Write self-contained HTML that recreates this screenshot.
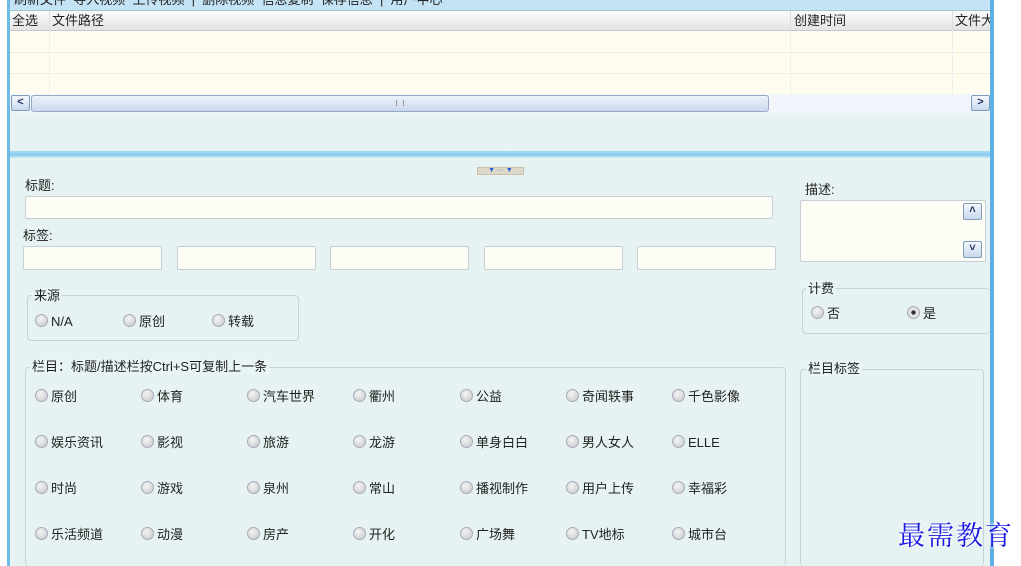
<!DOCTYPE html>
<html><head><meta charset="utf-8"><style>
*{margin:0;padding:0;box-sizing:border-box}
html,body{width:1021px;height:566px;overflow:hidden}
body{background:#fff;position:relative;font-family:"Liberation Sans","Noto Sans CJK SC",sans-serif;font-size:13px;color:#222}
.a{position:absolute}
.t{position:absolute;white-space:nowrap;font-size:13px;color:#222;line-height:15px}
.inp{position:absolute;background:#fefdf5;border:1px solid #c4cfd8;border-radius:2px}
.grp{position:absolute;border:1px solid #c5d2dc;border-radius:4px}
.leg{position:absolute;background:#e8f4f6;padding:0 2px;font-size:13px;line-height:15px;color:#222;white-space:nowrap}
.r{position:absolute;white-space:nowrap;font-size:13px;line-height:15px;color:#222}
.r::before{content:"";display:inline-block;width:11px;height:11px;border-radius:50%;background:radial-gradient(circle at 40% 35%,#f4f4f4,#c4c6c8);border:1px solid #aab;vertical-align:-1px;margin-right:3px}
.sel::before{background:radial-gradient(circle,#333 0 2px,#eee 2.5px,#c8c8c8)}
.btn{position:absolute;width:18px;height:16px;border:1px solid #7f9db9;border-radius:2px;background:linear-gradient(#f4f8fc,#c8d8ee);font-size:11px;line-height:13px;text-align:center;color:#203060;font-weight:bold}
</style></head><body>
<div class="a" style="left:7px;top:0;width:987px;height:566px;background:#e6f3f2;border-left:3px solid #6dbde8;border-right:4px solid #5fb0e2"></div>
<div class="a" style="left:10px;top:0;width:980px;height:11px;background:#c4e3f4;border-bottom:1px solid #9cc"></div>
<div class="t" style="left:14px;top:-8px">刷新文件 &nbsp;导入视频 &nbsp;上传视频 &nbsp;| &nbsp;删除视频 &nbsp;信息复制 &nbsp;保存信息 &nbsp;| &nbsp;用户中心</div>
<div class="a" style="left:10px;top:11px;width:980px;height:20px;background:linear-gradient(#fafafa,#e4e4e4);border-bottom:1px solid #c8c8c8"></div>
<div class="a" style="left:49px;top:11px;width:1px;height:84px;background:#ddd"></div>
<div class="a" style="left:790px;top:11px;width:1px;height:84px;background:#ddd"></div>
<div class="a" style="left:952px;top:11px;width:1px;height:84px;background:#ddd"></div>
<div class="t" style="left:12px;top:13px">全选</div>
<div class="t" style="left:52px;top:13px">文件路径</div>
<div class="t" style="left:794px;top:13px">创建时间</div>
<div class="t" style="left:955px;top:13px;width:35px;overflow:hidden">文件大</div>
<div class="a" style="left:10px;top:31px;width:980px;height:63px;background:#fefdf0"></div>
<div class="a" style="left:10px;top:52px;width:980px;height:1px;background:#efeedd"></div>
<div class="a" style="left:10px;top:73px;width:980px;height:1px;background:#efeedd"></div>
<div class="a" style="left:49px;top:31px;width:1px;height:63px;background:#eee"></div>
<div class="a" style="left:790px;top:31px;width:1px;height:63px;background:#eee"></div>
<div class="a" style="left:952px;top:31px;width:1px;height:63px;background:#eee"></div>
<div class="a" style="left:10px;top:94px;width:980px;height:19px;background:#f2f6fc"></div>
<div class="btn" style="left:11px;top:95px;width:19px">&lt;</div>
<div class="a" style="left:31px;top:95px;width:738px;height:17px;border:1px solid #9aa8c8;border-radius:3px;background:linear-gradient(#eef2fa,#cdd8ee)"></div>
<div class="a" style="left:396px;top:100px;width:8px;height:6px;border-left:1px solid #999;border-right:1px solid #999"></div>
<div class="btn" style="left:971px;top:95px;width:19px">&gt;</div>
<div class="a" style="left:10px;top:151px;width:980px;height:7px;background:linear-gradient(#a8dcf2,#84ccee 60%,#d8eef6)"></div>
<div class="a" style="left:477px;top:167px;width:47px;height:8px;background:#ddd8c8;border:1px solid #c8c0a8;font-size:7px;line-height:6px;color:#2a5ad8;text-align:center">▼ ··· ▼</div>
<div class="t" style="left:25px;top:178px">标题:</div>
<div class="inp" style="left:25px;top:196px;width:748px;height:23px"></div>
<div class="t" style="left:23px;top:228px">标签:</div>
<div class="inp" style="left:23px;top:246px;width:139px;height:24px"></div>
<div class="inp" style="left:177px;top:246px;width:139px;height:24px"></div>
<div class="inp" style="left:330px;top:246px;width:139px;height:24px"></div>
<div class="inp" style="left:484px;top:246px;width:139px;height:24px"></div>
<div class="inp" style="left:637px;top:246px;width:139px;height:24px"></div>
<div class="t" style="left:805px;top:182px">描述:</div>
<div class="inp" style="left:800px;top:200px;width:186px;height:62px"></div>
<div class="btn" style="left:963px;top:203px;width:19px;height:17px">˄</div>
<div class="btn" style="left:963px;top:241px;width:19px;height:17px">˅</div>
<div class="grp" style="left:27px;top:295px;width:272px;height:46px"></div>
<div class="leg" style="left:32px;top:288px">来源</div>
<div class="r" style="left:35px;top:314px">N/A</div>
<div class="r" style="left:123px;top:314px">原创</div>
<div class="r" style="left:212px;top:314px">转载</div>
<div class="grp" style="left:802px;top:288px;width:188px;height:46px;border-right:none"></div>
<div class="leg" style="left:806px;top:281px">计费</div>
<div class="r" style="left:811px;top:306px">否</div>
<div class="r sel" style="left:907px;top:306px">是</div>
<div class="grp" style="left:25px;top:367px;width:761px;height:199px;border-bottom:none"></div>
<div class="leg" style="left:30px;top:359px">栏目：标题/描述栏按Ctrl+S可复制上一条</div>
<div class="grp" style="left:800px;top:369px;width:184px;height:197px;border-bottom:none"></div>
<div class="leg" style="left:806px;top:361px">栏目标签</div>
<div class="r" style="left:35px;top:389px">原创</div><div class="r" style="left:141px;top:389px">体育</div><div class="r" style="left:247px;top:389px">汽车世界</div><div class="r" style="left:353px;top:389px">衢州</div><div class="r" style="left:460px;top:389px">公益</div><div class="r" style="left:566px;top:389px">奇闻轶事</div><div class="r" style="left:672px;top:389px">千色影像</div>
<div class="r" style="left:35px;top:435px">娱乐资讯</div><div class="r" style="left:141px;top:435px">影视</div><div class="r" style="left:247px;top:435px">旅游</div><div class="r" style="left:353px;top:435px">龙游</div><div class="r" style="left:460px;top:435px">单身白白</div><div class="r" style="left:566px;top:435px">男人女人</div><div class="r" style="left:672px;top:435px">ELLE</div>
<div class="r" style="left:35px;top:481px">时尚</div><div class="r" style="left:141px;top:481px">游戏</div><div class="r" style="left:247px;top:481px">泉州</div><div class="r" style="left:353px;top:481px">常山</div><div class="r" style="left:460px;top:481px">播视制作</div><div class="r" style="left:566px;top:481px">用户上传</div><div class="r" style="left:672px;top:481px">幸福彩</div>
<div class="r" style="left:35px;top:527px">乐活频道</div><div class="r" style="left:141px;top:527px">动漫</div><div class="r" style="left:247px;top:527px">房产</div><div class="r" style="left:353px;top:527px">开化</div><div class="r" style="left:460px;top:527px">广场舞</div><div class="r" style="left:566px;top:527px">TV地标</div><div class="r" style="left:672px;top:527px">城市台</div>
<div class="a" style="left:898px;top:517px;font-family:'Noto Serif CJK SC',serif;font-size:27px;line-height:34px;color:#1a1ae0;letter-spacing:2px;text-shadow:0 0 3px #fff,0 0 3px #fff,0 0 3px #fff;white-space:nowrap">最需教育</div>
</body></html>
